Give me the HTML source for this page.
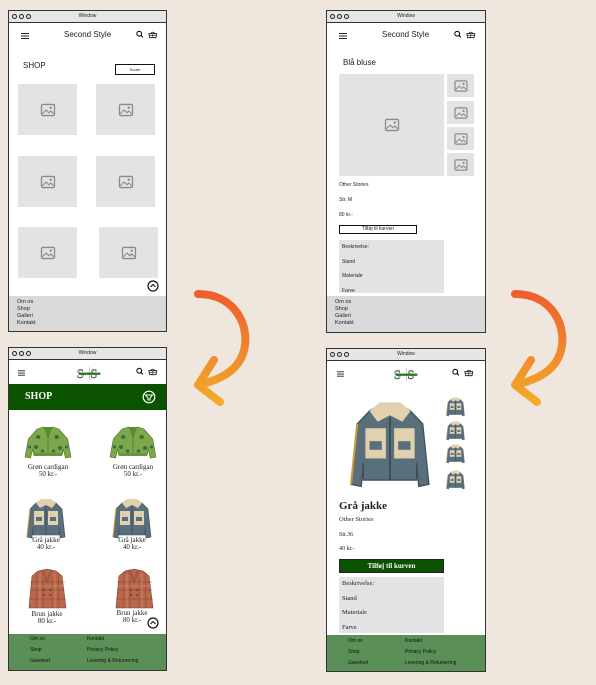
<!DOCTYPE html>
<html><head><meta charset="utf-8"><style>
*{margin:0;padding:0;box-sizing:border-box}
body{width:596px;height:685px;background:#efe6dd;position:relative;overflow:hidden;font-family:"Liberation Sans",sans-serif;color:#222}
.a{position:absolute}
.panel{position:absolute;background:#fff;border:1.5px solid #333;overflow:hidden}
.tb{position:absolute;left:0;right:0;top:0;height:12px;background:#e6e6e6;border-bottom:1.5px solid #333;font-size:5px;text-align:center;line-height:11px}
.dots{position:absolute;left:3px;top:3px;display:flex;gap:2px}
.dots i{width:5px;height:5px;border:1px solid #222;border-radius:50%;display:block}
.ph{position:absolute;background:#e3e3e3}
.ph svg{position:absolute;left:50%;top:50%;transform:translate(-50%,-50%)}
.ft{position:absolute;left:0;right:0;bottom:0;background:#d9d9d9;font-size:5.5px;line-height:7px;padding:3px 8px}
.gft{position:absolute;left:0;right:0;bottom:0;background:#5a8f57;font-size:5px;color:#111}
.gft span{position:absolute}
.serif{font-family:"Liberation Serif",serif}
.sk{font-size:6px}
.lbl{position:absolute;font-family:"Liberation Serif",serif;font-size:7px;text-align:center;line-height:7px;width:60px}
</style></head><body>
<svg width="0" height="0" style="position:absolute">
<defs>
<symbol id="img" viewBox="0 0 16 14"><rect x="1" y="1" width="14" height="12" rx="1.5" fill="none" stroke="#8a8a8a" stroke-width="1.4"/><path d="M2 11 L6 7 L9 10 L11 8 L14 11" fill="none" stroke="#8a8a8a" stroke-width="1.2"/><circle cx="11" cy="4.5" r="1.3" fill="#8a8a8a"/></symbol>
<symbol id="green" viewBox="0 0 44 36"><path d="M12 4 L18 2 L22 8 L26 2 L32 4 L40 14 L43 32 L38 33 L36 24 L35 30 L9 30 L8 24 L6 33 L1 32 L4 14 Z" fill="#7aa84a" stroke="#4d6d2a" stroke-width=".6"/><path d="M18 2 L22 14 L26 2" fill="#5b8a33"/><line x1="22" y1="10" x2="22" y2="30" stroke="#4d6d2a" stroke-width=".6"/><g fill="#3f6b3a"><circle cx="13" cy="12" r="2"/><circle cx="30" cy="12" r="2"/><circle cx="11" cy="22" r="2"/><circle cx="33" cy="23" r="2"/><circle cx="17" cy="26" r="1.6"/><circle cx="27" cy="26" r="1.6"/><circle cx="5" cy="22" r="1.5"/><circle cx="39" cy="22" r="1.5"/></g><rect x="9" y="28" width="26" height="3" fill="#6b9440"/></symbol>
<symbol id="grey" viewBox="0 0 40 44"><path d="M10 6 L15 3 L25 3 L30 6 L36 12 L39 40 L34 41 L33 30 L33 38 L7 38 L7 30 L6 41 L1 40 L4 12 Z" fill="#5a6f7c" stroke="#3e4e58" stroke-width=".6"/><path d="M10 6 L15 2 L25 2 L30 6 L26 11 L20 8 L14 11 Z" fill="#e2d1ae"/><rect x="8" y="14" width="10" height="14" fill="#e2d1ae"/><rect x="22" y="14" width="10" height="14" fill="#e2d1ae"/><rect x="10" y="20" width="6" height="4" fill="#5a6f7c"/><rect x="24" y="20" width="6" height="4" fill="#5a6f7c"/><line x1="20" y1="9" x2="20" y2="38" stroke="#2e3a42" stroke-width=".6"/><path d="M4 12 L1 40" stroke="#c79a3a" stroke-width="1"/></symbol>
<symbol id="brown" viewBox="0 0 40 44"><path d="M11 3 L20 1 L29 3 L35 8 L39 40 L2 40 L5 8 Z" fill="#b9684c" stroke="#7a3f2a" stroke-width=".6"/><path d="M14 3 L20 16 L26 3 L23 2 L20 10 L17 2 Z" fill="#a05a40"/><g stroke="#7a3a28" stroke-width=".5" opacity=".8"><line x1="3" y1="14" x2="38" y2="14"/><line x1="3" y1="22" x2="38" y2="22"/><line x1="2" y1="31" x2="39" y2="31"/><line x1="10" y1="4" x2="9" y2="40"/><line x1="16" y1="10" x2="16" y2="40"/><line x1="25" y1="10" x2="25" y2="40"/><line x1="31" y1="4" x2="32" y2="40"/></g><g stroke="#e8c0a8" stroke-width=".4" opacity=".7"><line x1="3" y1="18" x2="38" y2="18"/><line x1="13" y1="6" x2="13" y2="40"/><line x1="28" y1="6" x2="28" y2="40"/></g><g fill="#4a2218"><circle cx="17" cy="22" r=".8"/><circle cx="23" cy="22" r=".8"/><circle cx="17" cy="27" r=".8"/><circle cx="23" cy="27" r=".8"/></g></symbol>
<symbol id="hdr" viewBox="0 0 30 10"><circle cx="4" cy="4" r="3" fill="none" stroke="#111" stroke-width="1.3"/><line x1="6.2" y1="6.2" x2="8.5" y2="8.5" stroke="#111" stroke-width="1.5"/><path d="M16 4 L26 4 L25 9 L17 9 Z M18 4 Q21 0 24 4" fill="none" stroke="#111" stroke-width="1"/><line x1="16.5" y1="6.5" x2="25.5" y2="6.5" stroke="#111" stroke-width=".7"/><line x1="21" y1="4" x2="21" y2="9" stroke="#111" stroke-width=".7"/></symbol>
<symbol id="ham" viewBox="0 0 8 6"><path d="M0 .5H8M0 3H8M0 5.5H8" stroke="#222" stroke-width="1"/></symbol>
<symbol id="logo" viewBox="0 0 30 14"><text x="1" y="12" font-family="Liberation Serif" font-size="14" fill="none" stroke="#333" stroke-width=".5">S</text><text x="16" y="12" font-family="Liberation Serif" font-size="14" fill="none" stroke="#333" stroke-width=".5">S</text><line x1="15" y1="0" x2="15" y2="14" stroke="#777" stroke-width=".5"/><rect x="3" y="6" width="24" height="2.5" fill="#1d7a1d"/></symbol>
<linearGradient id="ag" x1="0" y1="0" x2="0" y2="1"><stop offset="0" stop-color="#ee5f2e"/><stop offset="1" stop-color="#f3ab2a"/></linearGradient>
</defs></svg>

<div class="panel" style="left:8px;top:10px;width:159px;height:322px">
<div class="tb"><div class="dots"><i></i><i></i><i></i></div>Window</div>
<svg class="a" style="left:12px;top:22px" width="8" height="6"><use href="#ham"/></svg>
<div class="a" style="left:55px;top:19px;font-size:8px">Second Style</div>
<svg class="a" style="left:127px;top:19px" width="24" height="9" viewBox="0 0 30 10"><use href="#hdr"/></svg>
<div class="a" style="left:14px;top:50px;font-size:8px">SHOP</div>
<div class="a" style="left:106px;top:53px;width:40px;height:11px;border:1.3px solid #111;font-size:4px;text-align:center;line-height:9px">Sorter</div>
<div class="ph" style="left:9px;top:73px;width:59px;height:51px"><svg width="15" height="13"><use href="#img"/></svg></div>
<div class="ph" style="left:87px;top:73px;width:59px;height:51px"><svg width="15" height="13"><use href="#img"/></svg></div>
<div class="ph" style="left:9px;top:145px;width:59px;height:51px"><svg width="15" height="13"><use href="#img"/></svg></div>
<div class="ph" style="left:87px;top:145px;width:59px;height:51px"><svg width="15" height="13"><use href="#img"/></svg></div>
<div class="ph" style="left:9px;top:216px;width:59px;height:51px"><svg width="15" height="13"><use href="#img"/></svg></div>
<div class="ph" style="left:90px;top:216px;width:59px;height:51px"><svg width="15" height="13"><use href="#img"/></svg></div>
<svg class="a" style="left:138px;top:269px" width="12" height="12"><circle cx="6" cy="6" r="5" fill="none" stroke="#111" stroke-width="1.2"/><path d="M3.5 7 L6 4.5 L8.5 7" fill="none" stroke="#111" stroke-width="1.1"/></svg>
<div class="ft" style="height:35px">Om os<br>Shop<br>Galleri<br>Kontakt</div>
</div>

<div class="panel" style="left:326px;top:10px;width:160px;height:323px">
<div class="tb"><div class="dots"><i></i><i></i><i></i></div>Window</div>
<svg class="a" style="left:12px;top:22px" width="8" height="6"><use href="#ham"/></svg>
<div class="a" style="left:55px;top:19px;font-size:8px">Second Style</div>
<svg class="a" style="left:127px;top:19px" width="24" height="9" viewBox="0 0 30 10"><use href="#hdr"/></svg>
<div class="a" style="left:16px;top:47px;font-size:8px">Blå bluse</div>
<div class="ph" style="left:12px;top:63px;width:105px;height:102px"><svg width="15" height="13"><use href="#img"/></svg></div>
<div class="ph" style="left:120px;top:63px;width:27px;height:23px"><svg width="14" height="12"><use href="#img"/></svg></div>
<div class="ph" style="left:120px;top:90px;width:27px;height:23px"><svg width="14" height="12"><use href="#img"/></svg></div>
<div class="ph" style="left:120px;top:116px;width:27px;height:23px"><svg width="14" height="12"><use href="#img"/></svg></div>
<div class="ph" style="left:120px;top:142px;width:27px;height:23px"><svg width="14" height="12"><use href="#img"/></svg></div>
<div class="a sk" style="left:12px;top:171px;font-size:5px">Other Stories</div>
<div class="a sk" style="left:12px;top:186px;font-size:5px">Str. M</div>
<div class="a sk" style="left:12px;top:201px;font-size:5px">80 kr.-</div>
<div class="a" style="left:12px;top:214px;width:78px;height:9px;border:1.3px solid #111;font-size:5px;text-align:center;line-height:7px">Tilføj til kurven</div>
<div class="ph" style="left:12px;top:229px;width:105px;height:53px;font-size:5px;line-height:14.5px;padding:0 3px">Beskrivelse:<br>Stand<br>Materiale<br>Farve</div>
<div class="ft" style="height:36px">Om os<br>Shop<br>Galleri<br>Kontakt</div>
</div>

<div class="panel" style="left:8px;top:347px;width:159px;height:324px">
<div class="tb"><div class="dots"><i></i><i></i><i></i></div>Window</div>
<svg class="a" style="left:9px;top:22px" width="7" height="6"><use href="#ham"/></svg>
<svg class="a" style="left:67px;top:19px" width="27" height="13" viewBox="0 0 30 14"><use href="#logo"/></svg>
<svg class="a" style="left:127px;top:19px" width="24" height="9" viewBox="0 0 30 10"><use href="#hdr"/></svg>
<div class="a" style="left:0;top:36px;width:157px;height:26px;background:#0b5200"></div>
<div class="a serif" style="left:16px;top:43px;color:#fff;font-size:10px;font-weight:bold">SHOP</div>
<svg class="a" style="left:133px;top:42px" width="14" height="14"><circle cx="7" cy="7" r="5.8" fill="none" stroke="#fff" stroke-width="1.2"/><path d="M3.5 5 H10.5 L8 8 V10 H6 V8 Z" fill="none" stroke="#fff" stroke-width="1"/></svg>
<svg class="a" style="left:15px;top:77px" width="48" height="36" viewBox="0 0 44 36" preserveAspectRatio="none"><use href="#green"/></svg>
<svg class="a" style="left:100px;top:77px" width="48" height="36" viewBox="0 0 44 36" preserveAspectRatio="none"><use href="#green"/></svg>
<div class="lbl" style="left:9px;top:116px">Grøn cardigan<br>50 kr.-</div>
<div class="lbl" style="left:94px;top:116px">Grøn cardigan<br>50 kr.-</div>
<svg class="a" style="left:17px;top:149px" width="40" height="44" viewBox="0 0 40 44"><use href="#grey"/></svg>
<svg class="a" style="left:103px;top:149px" width="40" height="44" viewBox="0 0 40 44"><use href="#grey"/></svg>
<div class="lbl" style="left:7px;top:189px">Grå jakke<br>40 kr.-</div>
<div class="lbl" style="left:93px;top:189px">Grå jakke<br>40 kr.-</div>
<svg class="a" style="left:18px;top:218px" width="40" height="48" viewBox="0 0 40 44"><use href="#brown"/></svg>
<svg class="a" style="left:105px;top:218px" width="40" height="48" viewBox="0 0 40 44"><use href="#brown"/></svg>
<div class="lbl" style="left:8px;top:263px">Brun jakke<br>80 kr.-</div>
<div class="lbl" style="left:93px;top:262px">Brun jakke<br>80 kr.-</div>
<svg class="a" style="left:138px;top:269px" width="12" height="12"><circle cx="6" cy="6" r="5" fill="none" stroke="#111" stroke-width="1.2"/><path d="M3.5 7 L6 4.5 L8.5 7" fill="none" stroke="#111" stroke-width="1.1"/></svg>
<div class="gft" style="height:36px"><span style="left:21px;top:2px">Om os</span><span style="left:21px;top:13px">Shop</span><span style="left:21px;top:24px">Gavekort</span><span style="left:78px;top:2px">Kontakt</span><span style="left:78px;top:13px">Privacy Policy</span><span style="left:78px;top:24px">Levering &amp; Returnering</span></div>
</div>

<div class="panel" style="left:326px;top:348px;width:160px;height:324px">
<div class="tb"><div class="dots"><i></i><i></i><i></i></div>Window</div>
<svg class="a" style="left:10px;top:22px" width="7" height="6"><use href="#ham"/></svg>
<svg class="a" style="left:66px;top:19px" width="27" height="13" viewBox="0 0 30 14"><use href="#logo"/></svg>
<svg class="a" style="left:125px;top:19px" width="24" height="9" viewBox="0 0 30 10"><use href="#hdr"/></svg>
<svg class="a" style="left:22px;top:49px" width="82" height="95" viewBox="0 0 40 44" preserveAspectRatio="none"><use href="#grey"/></svg>
<svg class="a" style="left:119px;top:47px" width="19" height="22" viewBox="0 0 40 44"><use href="#grey"/></svg>
<svg class="a" style="left:119px;top:71px" width="19" height="22" viewBox="0 0 40 44"><use href="#grey"/></svg>
<svg class="a" style="left:119px;top:94px" width="19" height="22" viewBox="0 0 40 44"><use href="#grey"/></svg>
<svg class="a" style="left:119px;top:120px" width="19" height="22" viewBox="0 0 40 44"><use href="#grey"/></svg>
<div class="a serif" style="left:12px;top:151px;font-size:11px;font-weight:bold">Grå jakke</div>
<div class="a serif" style="left:12px;top:167px;font-size:6.5px">Other Stories</div>
<div class="a serif" style="left:12px;top:183px;font-size:6px">Str.36</div>
<div class="a serif" style="left:12px;top:197px;font-size:6px">40 kr.-</div>
<div class="a serif" style="left:12px;top:210px;width:105px;height:14px;background:#0b5200;border:1px solid #222;color:#fff;font-size:7px;font-weight:bold;text-align:center;line-height:12px">Tilføj til kurven</div>
<div class="ph serif" style="left:12px;top:228px;width:105px;height:56px;font-size:6.5px;line-height:14.5px;padding:0 3px">Beskrivelse:<br>Stand<br>Materiale<br>Farve</div>
<div class="gft" style="height:36px"><span style="left:21px;top:3px">Om os</span><span style="left:21px;top:14px">Shop</span><span style="left:21px;top:25px">Gavekort</span><span style="left:78px;top:3px">Kontakt</span><span style="left:78px;top:14px">Privacy Policy</span><span style="left:78px;top:25px">Levering &amp; Returnering</span></div>
</div>

<svg class="a" style="left:180px;top:280px" width="100" height="140">
<path d="M18 14 C55 14 68 45 65 65 C62 90 40 100 18 105 M18 105 L34 80 M18 105 L40 122" fill="none" stroke="url(#ag)" stroke-width="8" stroke-linecap="round" stroke-linejoin="round"/>
</svg>
<svg class="a" style="left:500px;top:280px" width="96" height="140">
<path d="M18 14 C55 14 68 45 65 65 C62 90 40 100 18 105 M18 105 L34 80 M18 105 L40 122" fill="none" stroke="url(#ag)" stroke-width="8" stroke-linecap="round" stroke-linejoin="round" transform="translate(-3,0)"/>
</svg>
</body></html>
